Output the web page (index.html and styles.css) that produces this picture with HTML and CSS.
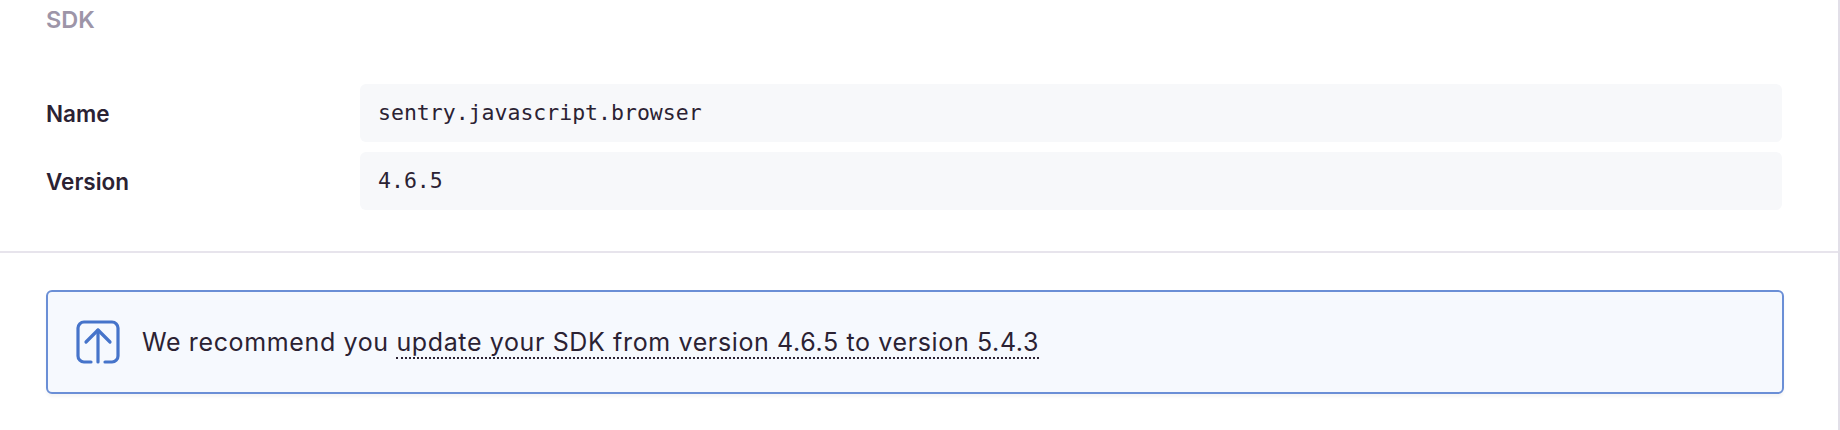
FILE: index.html
```html
<!DOCTYPE html>
<html lang="en">
<head>
  <meta charset="UTF-8">
  <title>SDK</title>
  <link rel="stylesheet" href="styles.css">
</head>

<body>
  <div class="panel">
    <section class="sdk-section">
      <h3 class="section-title">SDK</h3>
      <div class="kv-row">
        <div class="kv-key">Name</div>
        <div class="kv-value">sentry.javascript.browser</div>
      </div>
      <div class="kv-row">
        <div class="kv-key">Version</div>
        <div class="kv-value">4.6.5</div>
      </div>
    </section>

    <section class="alert-section">
      <div class="alert">
        <svg class="alert-icon" viewBox="0 0 44 44" fill="none" stroke="#4674ca" stroke-width="3.2" stroke-linecap="round" stroke-linejoin="round">
          <path d="M15 42H8a6 6 0 0 1-6-6V8a6 6 0 0 1 6-6h28a6 6 0 0 1 6 6v28a6 6 0 0 1-6 6h-7"/>
          <path d="M22 42V10"/>
          <path d="M10 22L22 10L34 22"/>
        </svg>
        <p class="alert-text">We recommend you <a class="update-link" href="#">update your SDK from version 4.6.5 to version 5.4.3</a></p>
      </div>
    </section>
  </div>
</body>

</html>
```

FILE: styles.css
```css
/* General Styles */
body {
  margin: 0;
  background-color: #fff;
  font-family: Inter, "Noto Sans", Arial, sans-serif;
  color: #2b2233;
}

.panel {
  height: 430px;
  box-sizing: border-box;
  border-right: 2px solid #e2dfe8;
  overflow: hidden;
}

/* SDK Section */
.sdk-section {
  height: 253px;
  box-sizing: border-box;
  padding: 6px 56px 0 46px;
  border-bottom: 2px solid #e7e4ec;
}

.section-title {
  margin: 0 0 50px;
  height: 28px;
  line-height: 28px;
  font-size: 23.5px;
  font-weight: 600;
  color: #9d95a8;
}

.kv-row {
  display: flex;
  align-items: center;
  margin-bottom: 10px;
}

.kv-key {
  width: 314px;
  font-size: 22.5px;
  font-weight: 600;
}

.kv-value {
  flex: 1;
  height: 58px;
  line-height: 58px;
  padding-left: 18px;
  background-color: #f7f8fa;
  border-radius: 6px;
  font-family: "DejaVu Sans Mono", monospace;
  font-size: 21.5px;
}

/* Alert Section */
.alert-section {
  padding: 37px 54px 0 46px;
}

.alert {
  display: flex;
  align-items: center;
  height: 104px;
  box-sizing: border-box;
  padding-left: 28px;
  background-color: #f6f9fe;
  border: 2px solid #6b8fd6;
  border-radius: 6px;
  box-shadow: 0 3px 3px rgba(0, 0, 0, 0.04);
}

.alert-icon {
  width: 44px;
  height: 44px;
  flex-shrink: 0;
}

.alert-text {
  margin: 0 0 0 22px;
  font-size: 25px;
  letter-spacing: 0.63px;
}

.update-link {
  color: inherit;
  text-decoration: none;
  border-bottom: 2px dotted #2b2233;
}
```
